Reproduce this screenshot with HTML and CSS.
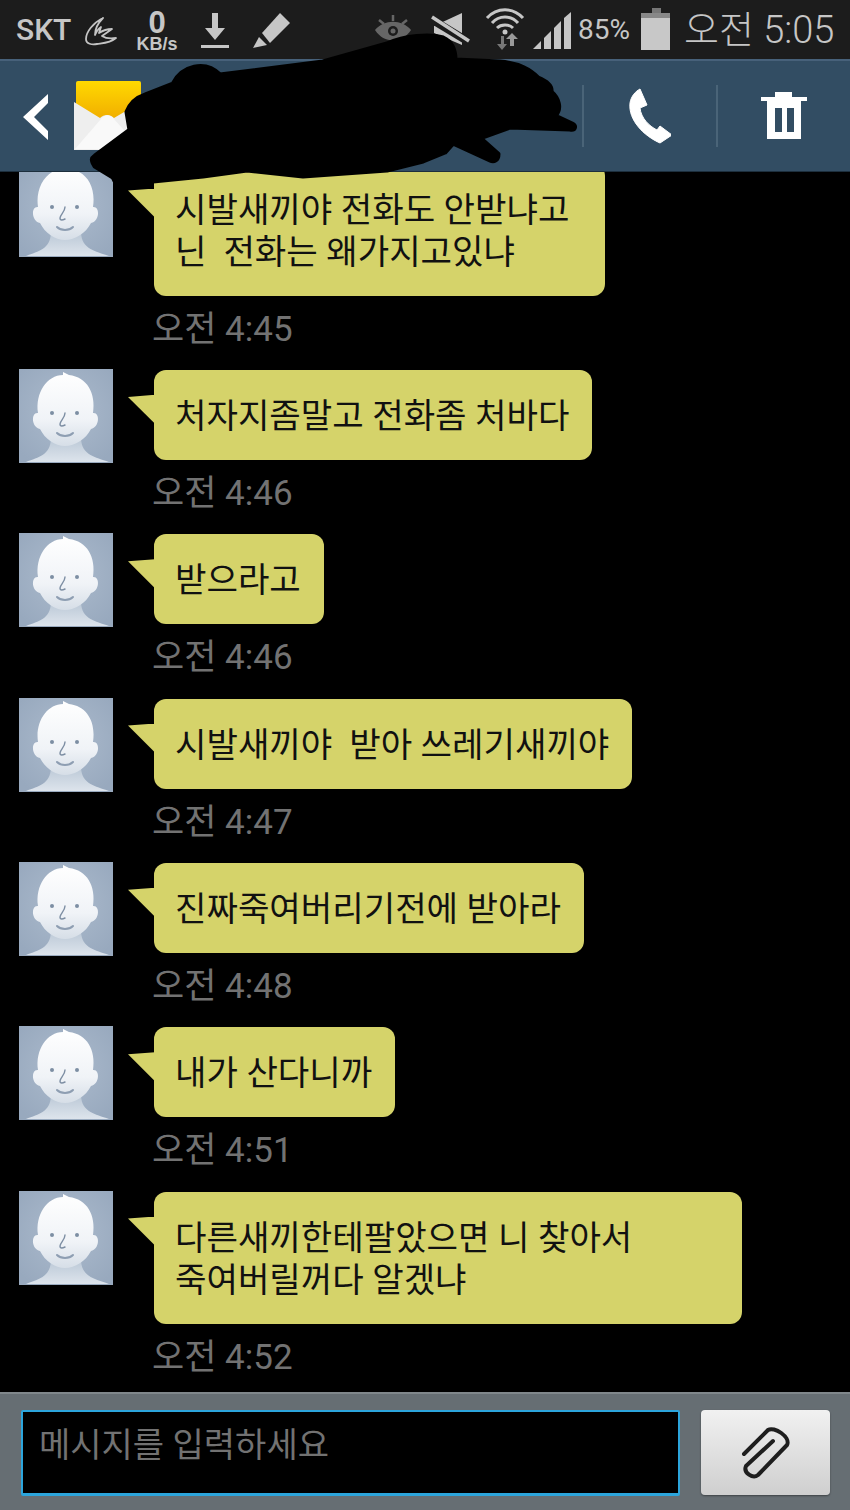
FILE: index.html
```html
<!DOCTYPE html>
<html lang="ko">
<head>
  <meta charset="UTF-8" />
  <meta name="viewport" content="width=device-width, initial-scale=1.0"/>
  <title>메시지</title>
  <link rel="stylesheet" href="styles.css">
</head>
<body>
<svg class="defs" width="0" height="0">
  <defs>
    <linearGradient id="skin" x1="0" y1="0" x2="0" y2="1">
      <stop offset="0" stop-color="#ffffff"/>
      <stop offset="0.65" stop-color="#f0f3f7"/>
      <stop offset="1" stop-color="#d6dee7"/>
    </linearGradient>
    <linearGradient id="neck" x1="0" y1="0" x2="0" y2="1">
      <stop offset="0" stop-color="#bcc9d7"/>
      <stop offset="1" stop-color="#dde4ec"/>
    </linearGradient>
    <radialGradient id="glow" cx="0.5" cy="0.45" r="0.65">
      <stop offset="0" stop-color="#acbbcd"/>
      <stop offset="1" stop-color="#98a9be"/>
    </radialGradient>
    <linearGradient id="note" x1="0" y1="0" x2="0" y2="1">
      <stop offset="0" stop-color="#ffd900"/>
      <stop offset="1" stop-color="#efa700"/>
    </linearGradient>
    <symbol id="avatar" viewBox="0 0 94 94">
      <rect width="94" height="94" fill="url(#glow)"/>
      <path d="M7 93 C20 88 31 86 32 70 L62 70 C63 86 76 88 90 93 Z" fill="url(#neck)"/>
      <path d="M19 44 C12 43 12 58 21 60 C26 70 36 77 46 77 C56 77 67 70 72 60 C81 58 81 43 74 44 C77 24 68 8 50 6 L44 3 L44 6 C28 6 16 24 19 44 Z" fill="url(#skin)"/>
      <circle cx="33" cy="44" r="2" fill="#7d8ea3"/>
      <circle cx="58" cy="44" r="2" fill="#7d8ea3"/>
      <path d="M46 44 C46 49 41 52 41 55 C41 58 44 57 46 56" fill="none" stroke="#7d8ea3" stroke-width="1.4" stroke-linecap="round"/>
      <path d="M38 64 C42 68 50 68 54 64" fill="none" stroke="#8e9eb2" stroke-width="2" stroke-linecap="round"/>
    </symbol>
  </defs>
</svg>

<div class="status-bar">
  <span class="carrier">SKT</span>
  <svg class="ic-swift" width="32" height="59" viewBox="85 0 32 59">
    <path d="M103 18 C93 23 86 32 86 39 C86 44 92 45 97 44 C104 43 110 43 116 38 C110 39 105 38 102 36 L112 29 C107 29 102 31 99 33 L101 27 C98 29 96 32 95 35 C95 29 98 23 103 18 Z" fill="none" stroke="#c4c4c4" stroke-width="1.8" stroke-linejoin="round"/>
  </svg>
  <div class="speed ic-speed"><b>0</b><small>KB/s</small></div>
  <svg class="ic-download" width="28" height="59" viewBox="201 0 28 59" fill="#c6c6c6">
    <path d="M212 13 H218 V28 H225 L215 40 L205 28 H212 Z"/>
    <rect x="201" y="45" width="28" height="3"/>
  </svg>
  <svg class="ic-pencil" width="38" height="59" viewBox="252 0 38 59" fill="#c6c6c6">
    <path d="M262 33 L280 13 L290 23 L270 43 Z"/>
    <path d="M259 37 L267 45 L253 48 Z"/>
  </svg>

  <div class="status-right">
    <svg width="38" height="59" viewBox="374 0 38 59">
      <path d="M375 30 C384 19 402 19 411 30 C402 44 384 44 375 30 Z" fill="#666"/>
      <circle cx="393" cy="31" r="5" fill="#1c1c1c"/>
      <circle cx="393" cy="31" r="2.5" fill="#666"/>
      <path d="M393 15 V21 M379 20 L384 24 M407 20 L402 24" stroke="#666" stroke-width="2.5"/>
    </svg>
    <svg class="ic-mute" width="39" height="59" viewBox="431 0 39 59">
      <path d="M434 26 L462 13 V45 L434 33 Z" fill="#c6c6c6"/>
      <path d="M431 19 L469 42" stroke="#1c1c1c" stroke-width="8"/>
      <path d="M432 17 L469 41" stroke="#c6c6c6" stroke-width="3.5"/>
    </svg>
    <svg class="ic-wifi" width="40" height="59" viewBox="485 0 40 59">
      <g fill="none" stroke="#c6c6c6" stroke-width="3">
        <path d="M487 18 C497 7 513 7 523 18"/>
        <path d="M492 23 C499 15 511 15 518 23"/>
        <path d="M497 28 C501 24 509 24 513 28"/>
      </g>
      <circle cx="505" cy="32" r="2.5" fill="#c6c6c6"/>
      <path d="M501 36 V44 H497 L502 50 L507 44 H504 V36 Z" fill="#777"/>
      <path d="M510 46 V39 H506 L512 33 L518 39 H514 V46 Z" fill="#999"/>
    </svg>
    <svg class="ic-signal" width="39" height="59" viewBox="533 0 39 59" fill="#c6c6c6">
      <path d="M533 49 L541 41 V49 Z"/>
      <path d="M544 38 L551 31 V49 H544 Z"/>
      <path d="M554 28 L561 21 V49 H554 Z"/>
      <path d="M564 18 L571 12 V49 H564 Z"/>
    </svg>
    <span class="battery-pct ic-pct">85%</span>
    <svg class="ic-battery" width="29" height="59" viewBox="641 0 29 59">
      <rect x="652" y="8" width="9" height="5" fill="#777"/>
      <rect x="641" y="13" width="29" height="5" fill="#888"/>
      <rect x="641" y="18" width="29" height="32" fill="#c8c8c8"/>
    </svg>
    <span class="clock ic-clock">오전 5:05</span>
  </div>
</div>

<header class="top-bar">
  <svg class="back" width="26" height="46" viewBox="0 0 26 46">
    <path d="M25 0 L0 23 L25 46 V37 L11 23 L25 9 Z" fill="#fff"/>
  </svg>
  <svg class="app-icon" width="68" height="70" viewBox="0 0 68 70">
    <rect x="2" y="0" width="65" height="44" rx="2" fill="url(#note)"/>
    <path d="M0 21 L26 37 C30 33 36 33 40 37 L67 21 V69 H0 Z" fill="#eeeeee"/>
    <path d="M1 68 L27 38 C31 33 36 33 40 38 L67 68 Z" fill="#f9f9f9"/>
  </svg>
  <div class="title"></div>
  <div class="action">
    <svg class="phone" width="44" height="56" viewBox="625 88 44 56">
      <path d="M638 89 L645 105 L638 108 C639 118 647 126 655 130 L658 126 L670 135 L658 143 C642 136 626 120 628 103 C629 96 634 91 638 89 Z" fill="#fff" stroke="#fff" stroke-linejoin="round"/>
    </svg>
  </div>
  <div class="action">
    <svg width="46" height="48" viewBox="761 92 46 48">
      <path d="M775 92 H792 V97 H807 V101 H801 V139 H767 V101 H761 V97 H775 Z M775 108 V132 H782 V108 Z M787 108 V132 H794 V108 Z" fill="#fff" fill-rule="evenodd"/>
    </svg>
  </div>
</header>

<main class="messages">
  <div class="msg">
    <svg class="avatar"><use href="#avatar"/></svg>
    <div class="msg-body">
      <div class="bubble bubble-first">시발새끼야 전화도 안받냐고<br>닌&nbsp; 전화는 왜가지고있냐</div>
      <div class="msg-time">오전 4:45</div>
    </div>
  </div>
  <div class="msg">
    <svg class="avatar"><use href="#avatar"/></svg>
    <div class="msg-body">
      <div class="bubble">처자지좀말고 전화좀 처바다</div>
      <div class="msg-time">오전 4:46</div>
    </div>
  </div>
  <div class="msg">
    <svg class="avatar"><use href="#avatar"/></svg>
    <div class="msg-body">
      <div class="bubble">받으라고</div>
      <div class="msg-time">오전 4:46</div>
    </div>
  </div>
  <div class="msg">
    <svg class="avatar"><use href="#avatar"/></svg>
    <div class="msg-body">
      <div class="bubble">시발새끼야&nbsp; 받아 쓰레기새끼야</div>
      <div class="msg-time">오전 4:47</div>
    </div>
  </div>
  <div class="msg">
    <svg class="avatar"><use href="#avatar"/></svg>
    <div class="msg-body">
      <div class="bubble">진짜죽여버리기전에 받아라</div>
      <div class="msg-time">오전 4:48</div>
    </div>
  </div>
  <div class="msg">
    <svg class="avatar"><use href="#avatar"/></svg>
    <div class="msg-body">
      <div class="bubble">내가 산다니까</div>
      <div class="msg-time">오전 4:51</div>
    </div>
  </div>
  <div class="msg">
    <svg class="avatar"><use href="#avatar"/></svg>
    <div class="msg-body">
      <div class="bubble bubble-last">다른새끼한테팔았으면 니 찾아서<br>죽여버릴꺼다 알겠냐</div>
      <div class="msg-time">오전 4:52</div>
    </div>
  </div>
</main>

<div class="composer">
  <input class="composer-input" type="text" placeholder="메시지를 입력하세요" />
  <button class="attach" type="button">
    <svg width="50" height="52" viewBox="0 0 50 52">
      <path d="M3 27 L27 3 C33 -1 50 10 46 18 L17 48 C12 52 2 46 5 39 L32 14" fill="none" stroke="#1e1e1e" stroke-width="4" stroke-linecap="round" stroke-linejoin="round"/>
    </svg>
  </button>
</div>

<!-- marker scribble over the contact name -->
<svg class="scribble" width="850" height="200" viewBox="0 0 850 200">
  <path fill-rule="evenodd" stroke="#000" stroke-width="5" stroke-linejoin="round" d="M127 112 C130 104 136 98 145 95 L173 84 C182 66 205 60 220 75 L323 62 L387 44 C405 36 430 34 443 38 C452 42 455 50 455 60 L500 62 C520 64 530 70 538 78 C548 82 552 86 551 92 C558 98 562 108 555 116 L572 124 C576 126 575 130 570 129 L510 127 L480 138 L498 154 C498 160 494 162 490 160 L453 143 L445 152 L423 161 L387 170 L303 176 L247 170 L203 176 L153 181 L115 181 L113 177 L95 166 C91 160 92 158 95 156 L130 130 Z M118 160 L132 152 L125 160 Z"/>
</svg>
</body>
</html>
```

FILE: styles.css
```css
* { box-sizing: border-box; }
html, body { height: 100%; }
body { margin: 0; height: 1510px; background: #000; font-family: Roboto, "Noto Sans CJK KR", sans-serif; display: flex; flex-direction: column; position: relative; overflow: hidden; }
.defs { position: absolute; }

.status-bar { height: 59px; flex: none; display: flex; align-items: center; background: #1c1c1c; color: #c6c6c6; padding: 0 17px 0 16px; }
.carrier { font-size: 30px; font-weight: 500; width: 55px; white-space: nowrap; }
.ic-swift { margin-left: 14px; }
.ic-speed { margin-left: 19px; }
.ic-download { margin-left: 23px; }
.ic-pencil { margin-left: 23px; }
.speed { display: flex; flex-direction: column; align-items: center; width: 42px; font-family: "Liberation Sans", sans-serif; margin-top: 4px; }
.speed b { font-size: 31px; line-height: 26px; font-weight: 700; }
.speed small { font-size: 18px; line-height: 17px; font-weight: 700; }
.status-right { margin-left: auto; display: flex; align-items: center; }
.ic-mute { margin-left: 19px; }
.ic-wifi { margin-left: 15px; }
.ic-signal { margin-left: 8px; }
.ic-pct { margin-left: 6px; }
.ic-battery { margin-left: 11px; }
.ic-clock { margin-left: 14px; }
.battery-pct { font-size: 28px; width: 52px; white-space: nowrap; }
.clock { font-size: 38px; line-height: 44px; width: 149px; white-space: nowrap; font-weight: 300; }

.top-bar { height: 113px; flex: none; display: flex; align-items: center; background: #324d63; border-top: 2px solid #47617a; border-bottom: 1px solid #1d2f3d; }
.back { margin-left: 23px; margin-top: 1px; }
.app-icon { margin-left: 25px; }
.title { flex: 1; }
.action { width: 134px; height: 62px; display: flex; align-items: center; justify-content: center; border-left: 2px solid #4a6478; }
.phone { margin-right: 3px; }

.messages { flex: 1; min-height: 0; overflow: hidden; display: flex; flex-direction: column; justify-content: flex-end; gap: 21.33px; padding: 0 0 15.5px 19px; }
.msg { flex: none; display: flex; gap: 41px; }
.avatar { width: 94px; height: 94px; flex: none; margin-top: -1px; }
.msg-body { display: flex; flex-direction: column; align-items: flex-start; gap: 13px; }
.bubble { position: relative; background: #d5d36a; color: #111; border-radius: 12px; padding: 25px 23px 23px 21px; font-size: 34.2px; line-height: 42px; white-space: nowrap; }
.bubble::before { content: ""; position: absolute; left: -26px; top: 25px; width: 27px; height: 29px; background: #d5d36a; clip-path: polygon(0 7%, 100% 0, 100% 100%); }
.bubble-first { width: 451px; }
.bubble-last { width: 588px; }
.msg-time { font-size: 35px; line-height: 40px; color: #727272; white-space: nowrap; margin-left: -2px; position: relative; top: 1px; }

.composer { height: 118px; flex: none; display: flex; align-items: flex-start; gap: 21px; background: #666e73; border-top: 2px solid #80878b; padding: 16px 20px 0 21px; }
.composer-input { width: 659px; height: 86px; background: #000; border: 2px solid #2ca5dc; border-bottom-width: 3px; border-radius: 2px; padding: 0 16px 16px; font-family: inherit; font-size: 34px; color: #727272; outline: none; }
.composer-input::placeholder { color: #727272; opacity: 1; }
.attach { width: 129px; height: 85px; border: none; border-radius: 4px; background: linear-gradient(#f1f1f1, #cfcfcf); box-shadow: 0 1px 2px rgba(0,0,0,0.4); display: flex; align-items: center; justify-content: center; padding: 0; }

.scribble { position: absolute; left: 0; top: 0; }
```
